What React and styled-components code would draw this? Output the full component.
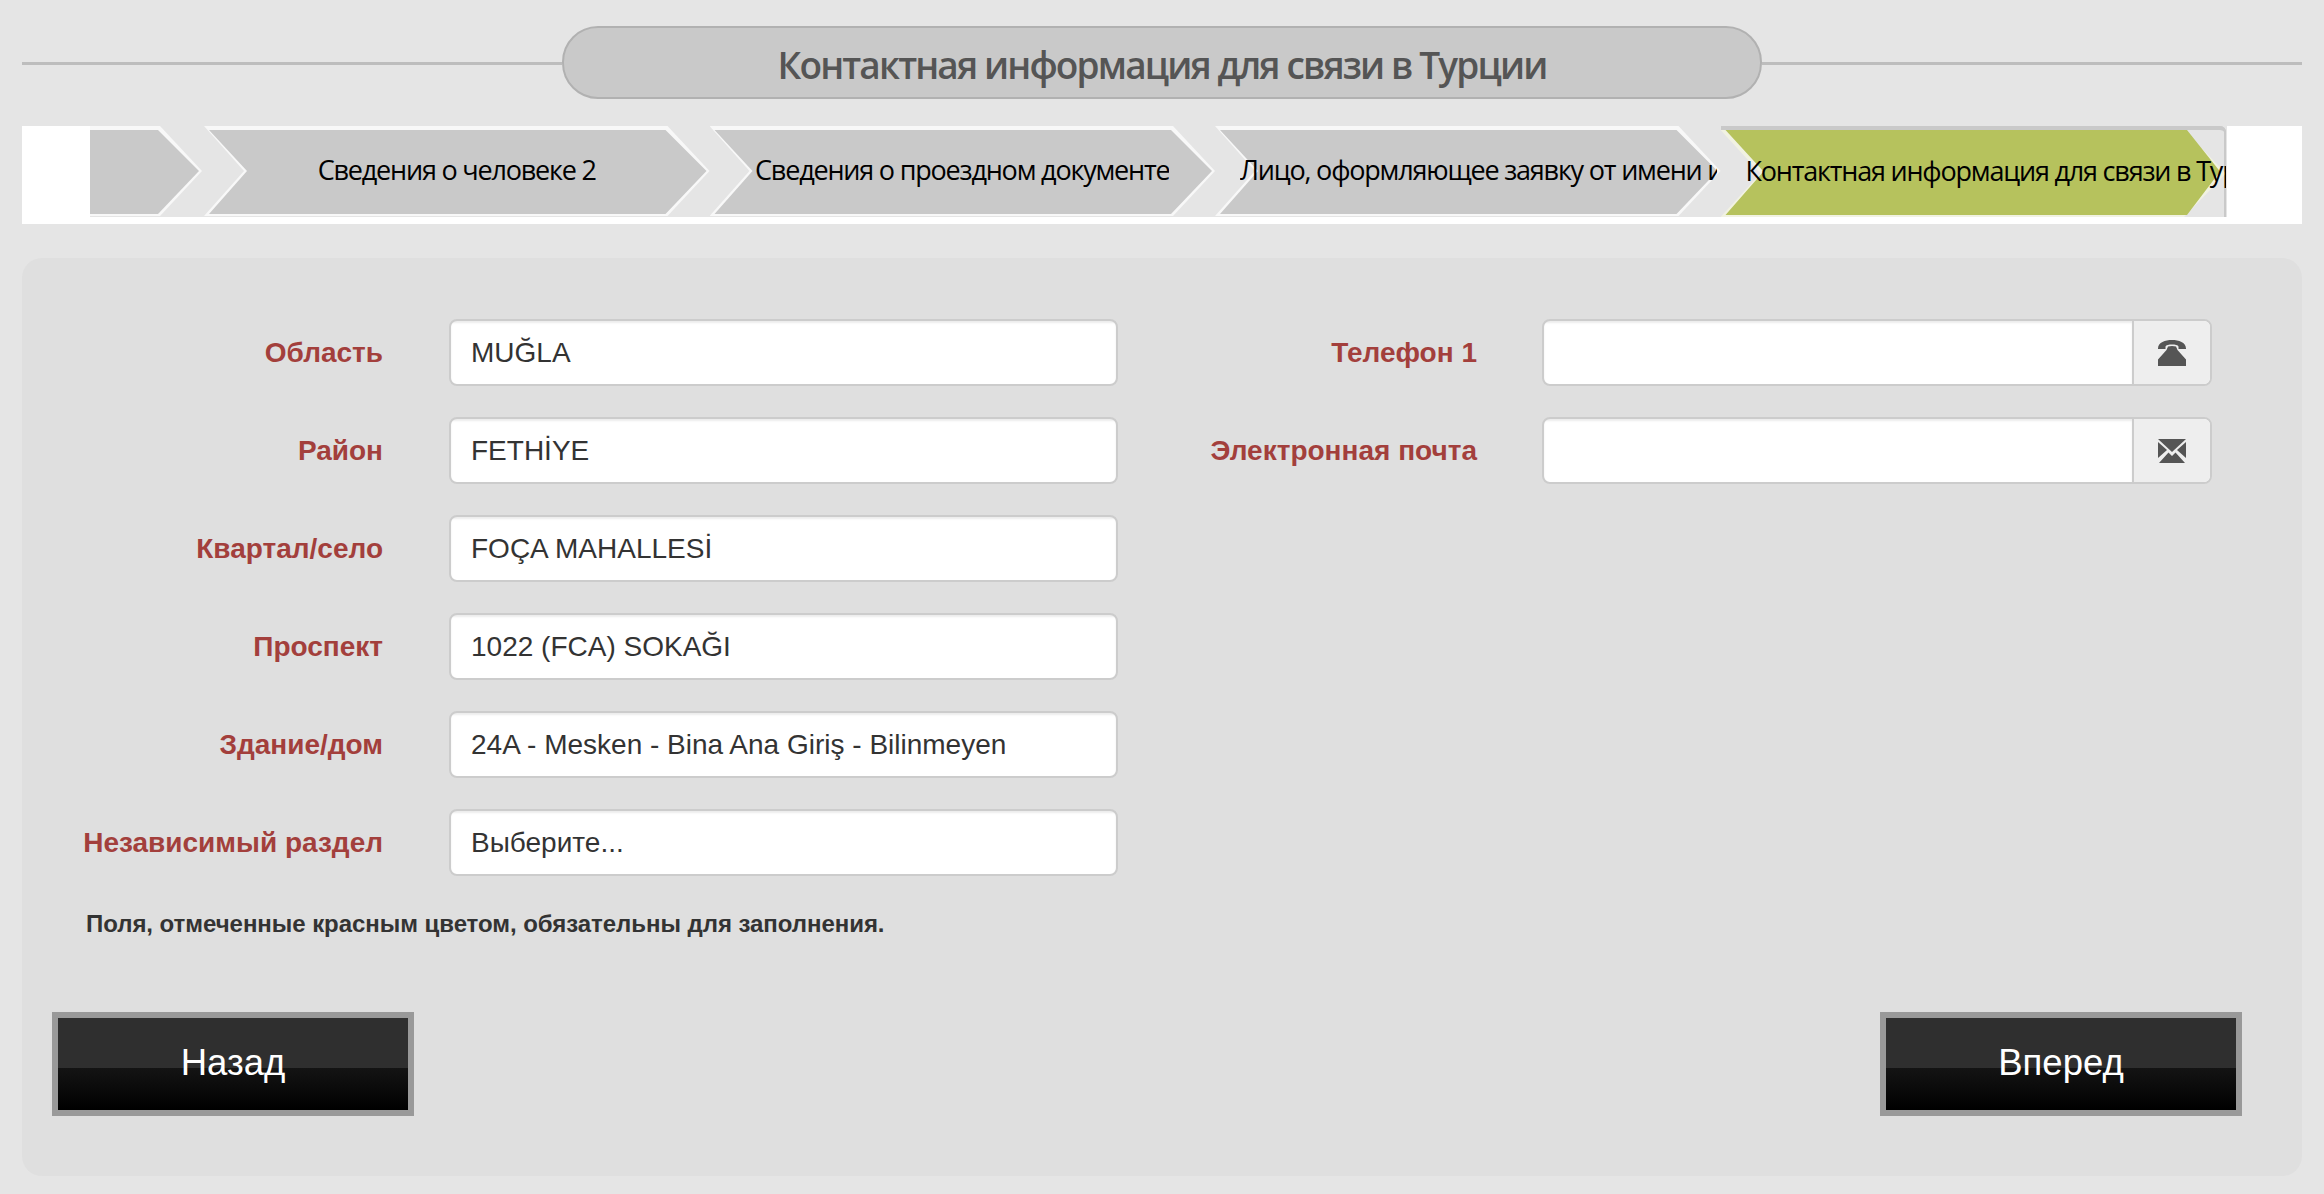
import React from 'react';
import styled, { createGlobalStyle } from 'styled-components';

const GlobalStyle = createGlobalStyle`
  html, body {
    margin: 0;
    background: #e5e5e5;
  }
  body {
    font-family: 'Liberation Sans', Arial, sans-serif;
  }
`;

const Page = styled.div`
  padding: 26px 22px 18px;
`;

const TitleBar = styled.div`
  display: flex;
  align-items: center;
  height: 73px;
`;

const TitleRule = styled.div`
  flex: 1;
  height: 3px;
  margin-top: 1px;
  background: #bdbdbd;
`;

const TitlePill = styled.h1`
  box-sizing: border-box;
  width: 1200px;
  height: 73px;
  margin: 0;
  padding-top: 3px;
  display: flex;
  align-items: center;
  justify-content: center;
  background: #c9c9c9;
  border: 2px solid #b1b1b1;
  border-radius: 36px;
  color: #555;
  font-family: 'Open Sans', sans-serif;
  font-size: 37px;
  font-weight: 600;
  letter-spacing: -1.85px;
`;

const StepsBand = styled.div`
  height: 98px;
  margin-top: 27px;
  padding-left: 68px;
  background: #fff;
`;

const Steps = styled.div`
  display: flex;
  width: 2137px;
  height: 91px;
  overflow: hidden;
  background: #e5e5e5;
`;

const outerShape = first => `polygon(
  0 0, calc(100% - 42px) 0, 100% 50%, calc(100% - 42px) 100%, 0 100%${first ? '' : ', 40px 50%'}
)`;

const innerShape = (first, active) => {
  const shoulder = active ? 39 : 44;
  const tip = active ? 6 : 3;
  const left = first ? '0' : '5px';
  return `polygon(
    ${left} 4px, calc(100% - ${shoulder}px) 4px, calc(100% - ${tip}px) 50%,
    calc(100% - ${shoulder}px) calc(100% - 2px), ${left} calc(100% - 2px)${first ? '' : ', 43px 50%'}
  )`;
};

const Step = styled.div`
  position: relative;
  flex: none;
  box-sizing: border-box;
  width: ${p => (p.$first ? '112px' : '505.5px')};
  height: ${p => (p.$active ? '91px' : '90px')};
  margin-right: ${p => (p.$first ? '2px' : '0')};
  padding: 0 25px 3px;
  display: flex;
  align-items: center;
  justify-content: safe center;
  overflow: hidden;
  white-space: nowrap;
  color: #000;
  font-family: 'Open Sans', sans-serif;
  font-size: 27px;
  letter-spacing: -1.2px;
  box-shadow: ${p => (p.$active ? 'inset 0 4px 0 #c9c9c9, inset -2px 0 0 #c9c9c9' : 'none')};
  border-top-right-radius: ${p => (p.$active ? '6px' : '0')};

  &::before {
    content: '';
    position: absolute;
    inset: ${p => (p.$active ? '4px 0 0 0' : '0')};
    background: ${p => (p.$active ? '#f1f2e2' : '#f8f8f8')};
    clip-path: ${p => outerShape(p.$first)};
  }

  &::after {
    content: '';
    position: absolute;
    inset: 0;
    background: ${p => (p.$active ? '#b6c25d' : '#c9c9c9')};
    clip-path: ${p => innerShape(p.$first, p.$active)};
  }
`;

const StepLabel = styled.span`
  position: relative;
  z-index: 1;
  flex: none;
  max-width: ${p => (p.$active ? 480 : 477)}px;
  overflow: hidden;
`;

const Panel = styled.div`
  box-sizing: border-box;
  height: 918px;
  margin-top: 34px;
  padding: 61px 90px 60px 0;
  background: #dfdfdf;
  border-radius: 20px;
`;

const Columns = styled.div`
  display: grid;
  grid-template-columns: 1096px 1fr;
`;

const Column = styled.div`
  display: flex;
  flex-direction: column;
  gap: 31px;
`;

const Field = styled.div`
  display: grid;
  grid-template-columns: ${p => p.$labelWidth}px 1fr;
  column-gap: ${p => p.$gap}px;
  align-items: center;
`;

const FieldLabel = styled.label`
  text-align: right;
  color: #a33f3c;
  font-size: 28px;
  font-weight: bold;
`;

const InputBox = styled.div`
  box-sizing: border-box;
  display: flex;
  height: 67px;
  background: #fff;
  border: 2px solid #ccc;
  border-radius: 8px;
  overflow: hidden;
`;

const TextInput = styled.input`
  flex: 1;
  min-width: 0;
  padding: 0 20px;
  border: 0;
  outline: 0;
  background: transparent;
  box-shadow: inset 0 2px 2px rgba(0, 0, 0, 0.08);
  color: #333;
  font-family: 'Liberation Sans', Arial, sans-serif;
  font-size: 28px;
`;

const Addon = styled.div`
  flex: none;
  width: 76px;
  display: flex;
  align-items: center;
  justify-content: center;
  background: #eee;
  border-left: 2px solid #ccc;
`;

const Note = styled.p`
  margin: 32px 0 0 64px;
  color: #333;
  font-size: 24px;
  line-height: 32px;
  font-weight: bold;
  letter-spacing: -0.05px;
`;

const Footer = styled.div`
  display: flex;
  justify-content: space-between;
  margin: 72px -30px 0 30px;
`;

const NavButton = styled.button`
  box-sizing: border-box;
  width: 362px;
  height: 104px;
  padding: 0 0 3px;
  border: 6px solid #999;
  background: linear-gradient(#2f2f2f 0, #2f2f2f 50px, #141414 50px, #000 100%);
  color: #fff;
  font-family: 'Liberation Sans', Arial, sans-serif;
  font-size: 36.5px;
`;

function PhoneIcon() {
  return (
    <svg width="28" height="26" viewBox="0 0 28 26" fill="#555">
      <path d="M0 9C-.2 2.500 7 0 14 0s14.200 2.500 14 9h-7.500V6.500C20 5 17 4.500 14 4.500S8 5 7.500 6.500V9z" />
      <path d="M10 6.500c2.500-.8 5.500-.8 8 0l1.500 3.500L28 19.500V26H0v-6.500L8.500 10z" />
    </svg>
  );
}

function MailIcon() {
  return (
    <svg width="28" height="24" viewBox="0 0 28 24" fill="#555">
      <path d="M0 0h28L14 13z" />
      <path d="M0 3v16l9-8z" />
      <path d="M28 3v16l-9-8z" />
      <path d="M1 24h26L17.500 13.500 14 17l-3.500-3.500z" />
    </svg>
  );
}

const address = [
  { label: 'Область', value: 'MUĞLA' },
  { label: 'Район', value: 'FETHİYE' },
  { label: 'Квартал/село', value: 'FOÇA MAHALLESİ' },
  { label: 'Проспект', value: '1022 (FCA) SOKAĞI' },
  { label: 'Здание/дом', value: '24A - Mesken - Bina Ana Giriş - Bilinmeyen' },
  { label: 'Независимый раздел', value: 'Выберите...' }
];

const contacts = [
  { label: 'Телефон 1', icon: <PhoneIcon /> },
  { label: 'Электронная почта', icon: <MailIcon /> }
];

const steps = [
  'Сведения о человеке 2',
  'Сведения о проездном документе',
  'Лицо, оформляющее заявку от имени и',
  'Контактная информация для связи в Турции'
];

export default function App() {
  return (
    <Page>
      <GlobalStyle />
      <TitleBar>
        <TitleRule />
        <TitlePill>Контактная информация для связи в Турции</TitlePill>
        <TitleRule />
      </TitleBar>

      <StepsBand>
        <Steps>
          <Step $first />
          {steps.map(function(step, i) {
            const active = i === steps.length - 1;
            return (
              <Step key={step} $active={active}>
                <StepLabel $active={active}>{step}</StepLabel>
              </Step>
            );
          })}
        </Steps>
      </StepsBand>

      <Panel>
        <Columns>
          <Column>
            {address.map(function(field) {
              return (
                <Field key={field.label} $labelWidth={361} $gap={66}>
                  <FieldLabel>{field.label}</FieldLabel>
                  <InputBox>
                    <TextInput readOnly value={field.value} />
                  </InputBox>
                </Field>
              );
            })}
          </Column>
          <Column>
            {contacts.map(function(field) {
              return (
                <Field key={field.label} $labelWidth={359} $gap={65}>
                  <FieldLabel>{field.label}</FieldLabel>
                  <InputBox>
                    <TextInput readOnly value="" />
                    <Addon>{field.icon}</Addon>
                  </InputBox>
                </Field>
              );
            })}
          </Column>
        </Columns>
        <Note>Поля, отмеченные красным цветом, обязательны для заполнения.</Note>
        <Footer>
          <NavButton>Назад</NavButton>
          <NavButton>Вперед</NavButton>
        </Footer>
      </Panel>
    </Page>
  );
}
